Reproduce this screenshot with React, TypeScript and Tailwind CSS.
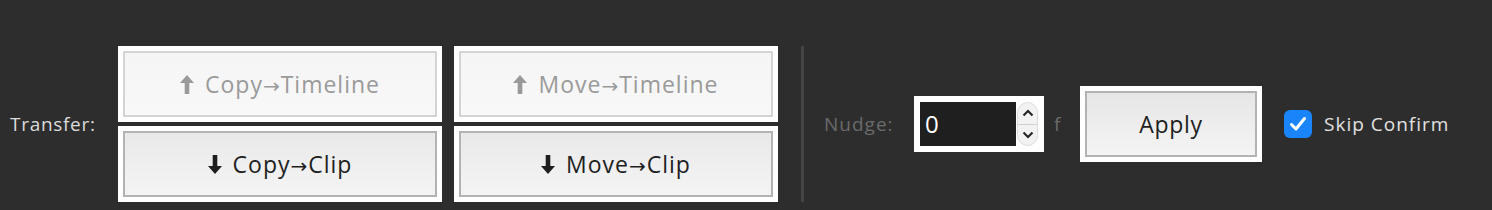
import React from "react";

const font = { fontFamily: "'Open Sans', 'Noto Sans', 'DejaVu Sans', sans-serif" };

function UpArrow({ color }: { color: string }) {
  return (
    <svg width="14" height="19" viewBox="0 0 14 19" className="inline-block">
      <path d="M7 0 L14 8 L9.3 8 L9.3 19 L4.7 19 L4.7 8 L0 8 Z" fill={color} />
    </svg>
  );
}
function DownArrow({ color }: { color: string }) {
  return (
    <svg width="14" height="19" viewBox="0 0 14 19" className="inline-block">
      <path d="M7 19 L14 11 L9.3 11 L9.3 0 L4.7 0 L4.7 11 L0 11 Z" fill={color} />
    </svg>
  );
}

function Label({ a, b }: { a: string; b: string }) {
  return (
    <span className="tracking-[1px]">
      {a}
      <span className="text-[20px]" style={{ fontFamily: "'DejaVu Sans', sans-serif" }}>
        →
      </span>
      {b}
    </span>
  );
}

function Btn({
  disabled,
  up,
  a,
  b,
}: {
  disabled?: boolean;
  up?: boolean;
  a: string;
  b: string;
}) {
  return (
    <div className="bg-white p-[5px] w-[324px] h-[76px]">
      <div
        className={
          disabled
            ? "h-full border-2 border-[#d4d4d4] bg-[linear-gradient(#f5f5f5,#f8f8f8)] flex items-center justify-center gap-[11px] text-[#9a9a9a] text-[23px]"
            : "h-full border-2 border-[#b3b3b3] bg-[linear-gradient(#e9e9e9,#f4f4f4)] flex items-center justify-center gap-[11px] text-[#1e1e1e] text-[23px]"
        }
      >
        {up ? (
          <UpArrow color={disabled ? "#9a9a9a" : "#1e1e1e"} />
        ) : (
          <DownArrow color={disabled ? "#9a9a9a" : "#1e1e1e"} />
        )}
        <Label a={a} b={b} />
      </div>
    </div>
  );
}

export default function App() {
  return (
    <div
      className="h-[210px] w-[1492px] bg-[#2d2d2d] flex items-center pt-[46px] pb-[8px]"
      style={font}
    >
      <div className="w-[118px] pl-[10px] text-[19px] tracking-[0.7px] text-[#dcdcdc]">Transfer:</div>
      <div className="grid grid-cols-[324px_324px] gap-x-[12px] gap-y-[4px]">
        <Btn disabled up a="Copy" b="Timeline" />
        <Btn disabled up a="Move" b="Timeline" />
        <Btn a="Copy" b="Clip" />
        <Btn a="Move" b="Clip" />
      </div>
      <div className="ml-[23px] w-[3px] self-stretch bg-[#444444]" />
      <div className="ml-[20px] w-[90px] text-[19px] tracking-[1px] text-[#6a6a6a]">Nudge:</div>
      <div className="bg-white p-[6px] w-[130px] h-[56px] flex">
        <div className="w-[96px] h-full bg-[#1f1f1f] text-white text-[24px] flex items-center pl-[5px]">
          0
        </div>
        <div className="ml-[1px] w-[21px] h-full rounded-full bg-[#f2f2f2] border border-[#dddddd] flex flex-col">
          <div className="flex-1 flex items-center justify-center border-b border-[#cfcfcf]">
            <svg width="12" height="8" viewBox="0 0 12 8">
              <path d="M1.5 6.5 L6 2 L10.5 6.5" stroke="#222" strokeWidth="2" fill="none" />
            </svg>
          </div>
          <div className="flex-1 flex items-center justify-center">
            <svg width="12" height="8" viewBox="0 0 12 8">
              <path d="M1.5 1.5 L6 6 L10.5 1.5" stroke="#222" strokeWidth="2" fill="none" />
            </svg>
          </div>
        </div>
      </div>
      <div className="ml-[10px] w-[26px] text-[19px] text-[#6a6a6a]">f</div>
      <div className="bg-white p-[5px] w-[182px] h-[76px]">
        <div className="h-full border-2 border-[#b3b3b3] bg-[linear-gradient(#e6e6e6,#f4f4f4)] flex items-center justify-center text-[23px] tracking-[0.7px] text-[#1e1e1e]">
          Apply
        </div>
      </div>
      <div className="ml-[22px] w-[28px] h-[28px] rounded-[6px] bg-[#1a84fb] flex items-center justify-center">
        <svg width="18" height="16" viewBox="0 0 18 16">
          <path d="M2.5 8.5 L7 13 L15.5 2.5" stroke="white" strokeWidth="3" strokeLinecap="round" strokeLinejoin="round" fill="none" />
        </svg>
      </div>
      <div className="ml-[12px] text-[19px] tracking-[1px] text-[#e2e2e2]">Skip Confirm</div>
    </div>
  );
}
